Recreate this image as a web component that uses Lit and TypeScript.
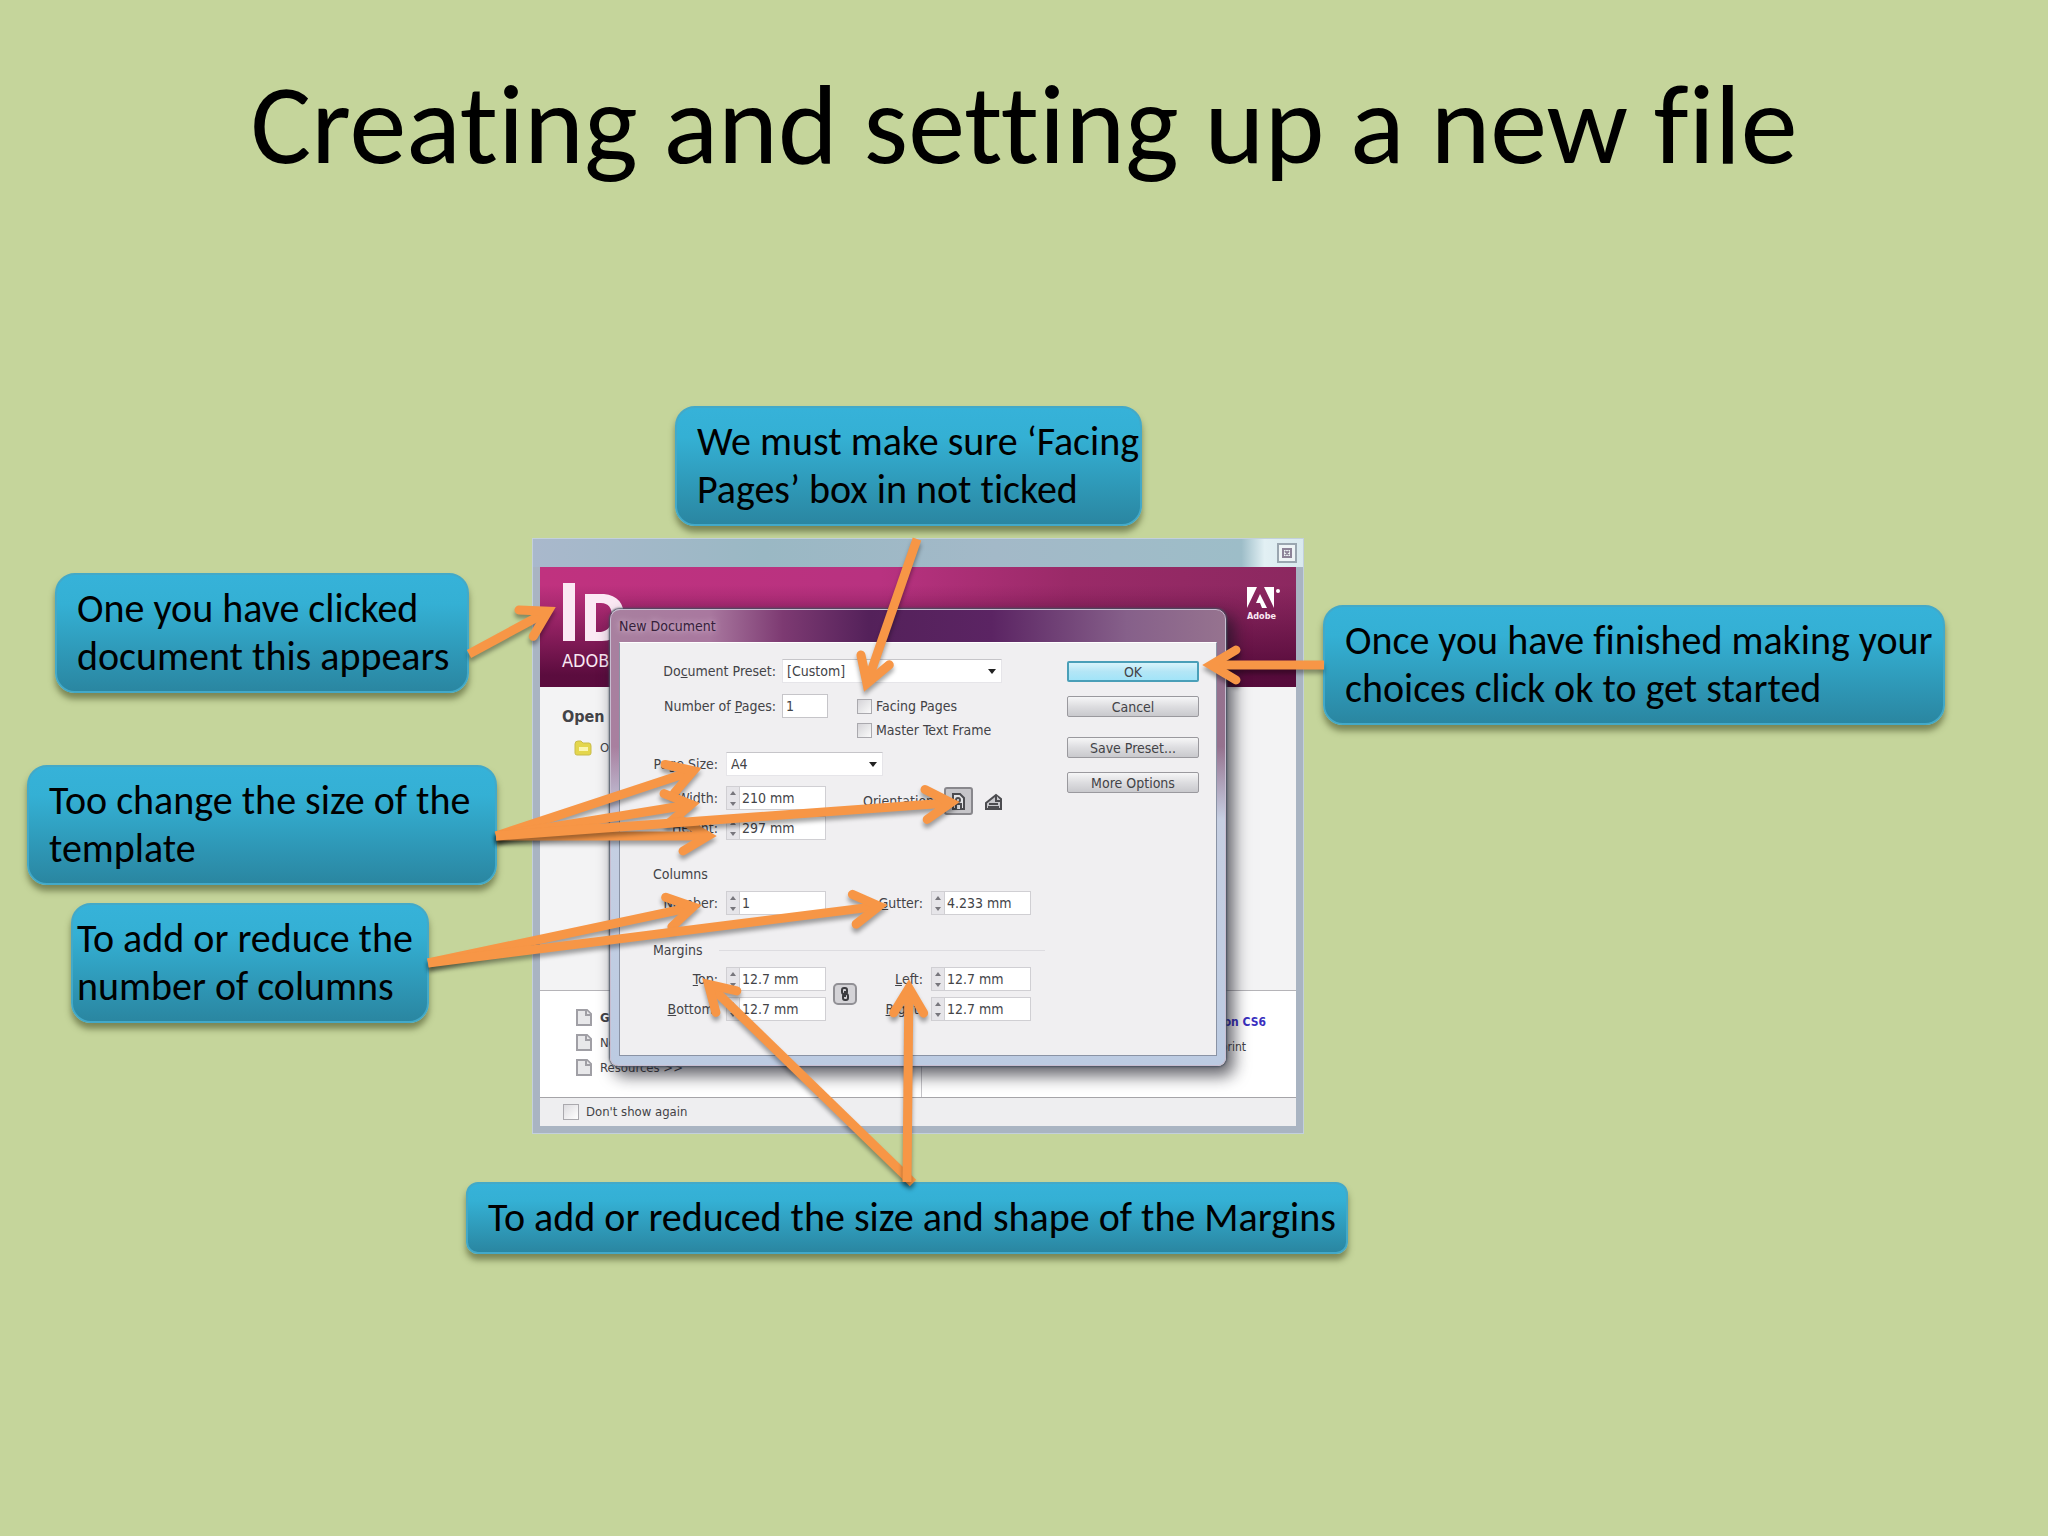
import { LitElement, html, css, svg } from "lit";
import { customElement, property } from "lit/decorators.js";
import { styleMap } from "lit/directives/style-map.js";

interface Note {
  text: string;
  x: number;
  y: number;
  w: number;
  kind: string;
}

// Offsets are measured from the horizontal centre of the slide.
const NOTES: Note[] = [
  { text: "One you have clicked\ndocument this appears", x: -969, y: 373, w: 414, kind: "" },
  { text: "We must make sure ‘Facing\nPages’ box in not ticked", x: -349, y: 206, w: 467, kind: "" },
  { text: "Too change the size of the\ntemplate", x: -997, y: 565, w: 470, kind: "" },
  { text: "To add or reduce the\nnumber of columns", x: -953, y: 703, w: 358, kind: "tight" },
  { text: "Once you have finished making your\nchoices click ok to get started", x: 299, y: 405, w: 622, kind: "" },
  { text: "To add or reduced the size and shape of the Margins", x: -558, y: 982, w: 882, kind: "single" },
];

// Each arrow: start x, start y, tip x, tip y.
const ARROWS: number[][] = [
  [469, 654, 556, 607],
  [917, 539, 864, 692],
  [1324, 665, 1202, 665],
  [496, 836, 702, 768],
  [496, 836, 700, 803],
  [496, 836, 717, 836],
  [496, 836, 960, 802],
  [428, 963, 702, 905],
  [428, 963, 888, 905],
  [913, 1183, 702, 978],
  [907, 1182, 909, 979],
];

@customElement("arrow-layer")
class ArrowLayer extends LitElement {
  static styles = css`
    :host { display: block; pointer-events: none; }
    .layer { display: block; overflow: visible; }
    .arrow { fill: none; stroke: #f79646; stroke-width: 9; filter: drop-shadow(0 4px 2px rgba(0, 0, 0, 0.35)); }
    .head { stroke-linecap: round; stroke-linejoin: miter; }
  `;
  render() {
    return html`<svg class="layer" width="2048" height="1336" viewBox="0 200 2048 1336" aria-hidden="true">
      ${ARROWS.map(([x1, y1, x2, y2]) => {
        const len = Math.hypot(x2 - x1, y2 - y1);
        const ux = (x2 - x1) / len;
        const uy = (y2 - y1) / len;
        const tx = x2 - ux * 9;
        const ty = y2 - uy * 9;
        const bx = tx - ux * 25;
        const by = ty - uy * 25;
        return svg`<g class="arrow">
          <path d="M${x1} ${y1}L${tx} ${ty}"></path>
          <path class="head" d="M${bx - uy * 15} ${by + ux * 15}L${tx} ${ty}L${bx + uy * 15} ${by - ux * 15}"></path>
        </g>`;
      })}
    </svg>`;
  }
}

@customElement("measure-field")
class MeasureField extends LitElement {
  @property() label = "";
  @property() key = "";
  @property() value = "";
  static styles = css`
    :host { display: flex; align-items: center; justify-content: flex-end; height: 24px; gap: 8px; }
    .label { white-space: nowrap; }
    .key { text-decoration: underline; }
    .box { display: flex; flex: none; width: 100px; height: 24px; box-sizing: border-box; border: 1px solid #d0cfd3; background: #fff; }
    .spin { display: flex; flex-direction: column; width: 12px; background: #e6e5e9; border-right: 1px solid #d0cfd3; }
    .step { flex: 1; display: grid; place-items: center; border: 0; padding: 0; background: none; min-height: 0; }
    .glyph { display: block; fill: #77767c; }
    .input { flex: 1; min-width: 0; border: 0; padding: 0 2px; background: #fff; font: inherit; color: inherit; outline: 0; }
  `;
  render() {
    const i = this.label.indexOf(this.key);
    const cut = this.key ? i : 0;
    return html`<label class="label" for="v"
        >${this.label.slice(0, cut)}<span class="key">${this.key}</span>${this.label.slice(cut + this.key.length)}</label
      >
      <div class="box">
        <div class="spin">
          <button class="step" aria-label="Increase"><svg class="glyph" width="6" height="4"><path d="M0 4L3 0L6 4Z"></path></svg></button>
          <button class="step" aria-label="Decrease"><svg class="glyph" width="6" height="4"><path d="M0 0L3 4L6 0Z"></path></svg></button>
        </div>
        <input class="input" id="v" .value=${this.value} />
      </div>`;
  }
}

@customElement("new-document")
class NewDocument extends LitElement {
  static styles = css`
    :host { display: block; box-sizing: border-box; padding: 0 8px 9px; border: 1px solid #c7bdd0; border-radius: 10px 10px 8px 8px;
      background: linear-gradient(180deg, rgba(150, 110, 145, 0) 30%, #c6cfe2 46%, #bccbe2 100%),
        linear-gradient(90deg, #a8809f 0, #a9789f 16%, #7d3a72 28%, #54215a 42%, #5b2463 62%, #86608a 84%, #96738f 100%);
      box-shadow: 0 0 2px 1px #46505f, 6px 8px 16px 2px rgba(20, 20, 30, 0.65); color: #434347; }
    .title { margin: 0; height: 32px; line-height: 32px; font-size: 14px; font-weight: 400; color: #35203a; text-shadow: 0 0 6px #e6cfe2; }
    .body { display: flex; justify-content: space-between; align-items: flex-start; box-sizing: border-box; min-height: 414px;
      padding: 16px 17px 0 33px; background: #f0eff1; border: 1px solid #8a93a5; border-top-color: #fff; }
    .form { display: flex; flex-direction: column; width: 392px; }
    .row { display: flex; align-items: center; height: 24px; }
    .wide { gap: 6px; padding-left: 5px; }
    .name { text-align: right; white-space: nowrap; }
    .n1 { width: 118px; }
    .n2 { width: 65px; }
    .key { text-decoration: underline; }
    .drop { position: relative; display: flex; }
    .select { appearance: none; border: 1px solid #e6e5e9; border-top-color: #c6c5c9; height: 24px; padding: 0 4px; background: #fff; font: inherit; color: inherit; }
    .s1 { width: 220px; }
    .s2 { width: 157px; }
    .arrow { position: absolute; right: 6px; top: 10px; fill: #222; }
    .pages { display: flex; align-items: flex-start; margin-top: 11px; }
    .count { box-sizing: border-box; width: 46px; height: 24px; border: 1px solid #c6c5c9; padding: 0 3px; font: inherit; color: inherit; background: #fff; }
    .ticks { margin-left: 29px; }
    .tick { display: flex; align-items: center; gap: 4px; height: 24px; white-space: nowrap; }
    .check { appearance: none; margin: 0; width: 15px; height: 15px; border: 1px solid #aaa9ae; background: linear-gradient(135deg, #d5d4d8, #fafafa); }
    .size { gap: 8px; margin-top: 10px; }
    .pair { display: flex; align-items: center; justify-content: space-between; margin-top: 10px; }
    .stack { display: grid; gap: 6px; width: 173px; }
    .far { width: 160px; margin-right: 14px; }
    .orient { display: flex; align-items: center; gap: 6px; width: 182px; height: 30px; align-self: flex-start; }
    .page { display: grid; place-items: center; width: 29px; height: 28px; padding: 0; border: 0; background: none; }
    .on { background: #c6c5c9; border: 2px solid #88878c; border-radius: 3px; }
    .group { margin: 0; font: inherit; height: 18px; line-height: 18px; display: flex; align-items: center; gap: 16px; }
    .cols { margin-top: 25px; }
    .marg { margin-top: 26px; }
    .marg::after { content: ""; flex: 1; height: 1px; background: #dddce0; }
    .near { margin-top: 8px; }
    .link { display: grid; place-items: center; width: 24px; height: 22px; padding: 0; border: 2px solid #919095; border-radius: 5px; background: #d4d3d7; }
    .both { display: flex; align-items: center; gap: 7px; }
    .actions { display: flex; flex-direction: column; width: 132px; padding-top: 2px; gap: 14px; }
    .btn { height: 21px; padding: 0; border: 1px solid #9a999e; border-radius: 2px; background: linear-gradient(#f6f6f7, #dddde0 50%, #c9c9cd); font: inherit; line-height: 18px; color: inherit; }
    .ok { border: 2px solid #4a9fb8; background: linear-gradient(#d8f4fb, #b4e6f6 50%, #a2e4f8); }
    .after { margin-top: 6px; }
  `;
  render() {
    return html`<h2 class="title">New Document</h2>
      <div class="body">
        <div class="form">
          <div class="row wide">
            <label class="name n1" for="preset">Do<span class="key">c</span>ument Preset:</label>
            <span class="drop"><select class="select s1" id="preset"><option>[Custom]</option></select>
              <svg class="arrow" width="8" height="5"><path d="M0 0H8L4 5Z"></path></svg></span>
          </div>
          <div class="pages">
            <div class="row wide">
              <label class="name n1" for="count">Number of <span class="key">P</span>ages:</label>
              <input class="count" id="count" value="1" />
            </div>
            <div class="ticks">
              <label class="tick"><input class="check" type="checkbox" />Facing Pages</label>
              <label class="tick"><input class="check" type="checkbox" />Master Text Frame</label>
            </div>
          </div>
          <div class="row size">
            <label class="name n2" for="size">Page Size:</label>
            <span class="drop"><select class="select s2" id="size"><option>A4</option></select>
              <svg class="arrow" width="8" height="5"><path d="M0 0H8L4 5Z"></path></svg></span>
          </div>
          <div class="pair">
            <div class="stack">
              <measure-field label="Width:" key="W" value="210 mm"></measure-field>
              <measure-field label="Height:" key="H" value="297 mm"></measure-field>
            </div>
            <div class="orient">
              <span>Orientation:</span>
              <button class="page on" aria-label="Portrait">
                <svg width="15" height="19" fill="#e4e4e6" stroke="#4c4c50" stroke-width="2"><path d="M2 2H9L13 6V17H2Z"></path><circle cx="7" cy="8" r="2"></circle><path d="M5 17V12H10V17"></path></svg>
              </button>
              <button class="page" aria-label="Landscape">
                <svg width="19" height="19" fill="#c8c8cc" stroke="#4c4c50" stroke-width="2"><path d="M2 17V11L12 3L17 7V17Z"></path><path d="M5 12H14M12 3V9H17M4 15H15"></path></svg>
              </button>
            </div>
          </div>
          <h3 class="group cols">Columns</h3>
          <div class="pair near">
            <div class="stack"><measure-field label="Number:" key="N" value="1"></measure-field></div>
            <div class="stack far"><measure-field label="Gutter:" key="G" value="4.233 mm"></measure-field></div>
          </div>
          <h3 class="group marg">Margins</h3>
          <div class="pair near">
            <div class="both">
              <div class="stack">
                <measure-field label="Top:" key="T" value="12.7 mm"></measure-field>
                <measure-field label="Bottom:" key="B" value="12.7 mm"></measure-field>
              </div>
              <button class="link" aria-label="Make all settings the same">
                <svg width="10" height="14" fill="none" stroke="#3c3c40" stroke-width="2"><rect x="2" y="1" width="5" height="6" rx="2"></rect><rect x="3" y="7" width="5" height="6" rx="2"></rect><path d="M5 4V10"></path></svg>
              </button>
            </div>
            <div class="stack far">
              <measure-field label="Left:" key="L" value="12.7 mm"></measure-field>
              <measure-field label="Right:" key="R" value="12.7 mm"></measure-field>
            </div>
          </div>
        </div>
        <div class="actions">
          <button class="btn ok">OK</button>
          <button class="btn">Cancel</button>
          <button class="btn after">Save Preset...</button>
          <button class="btn">More Options</button>
        </div>
      </div>`;
  }
}

@customElement("welcome-window")
class WelcomeWindow extends LitElement {
  static styles = css`
    :host { display: flex; flex-direction: column; box-sizing: border-box; padding: 0 7px 7px; border: 1px solid #c3d0dc; color: #434347; background: #a9b4c2; }
    .bar { display: flex; justify-content: flex-end; align-items: center; height: 28px; margin: 0 -7px; padding-right: 6px;
      background: linear-gradient(90deg, #a9b8cc, #9ab8c4 30%, #a3b9c8 60%, #9dbdc8 92%, #e2f0f4 95%, #d9e9ee); }
    .close { display: grid; place-items: center; width: 20px; height: 20px; padding: 0; border: 2px solid #9aa6b0; background: #eef4f6; }
    .banner { display: flex; justify-content: space-between; box-sizing: border-box; height: 120px; padding: 14px 15px 0 22px; color: #fbe9f4;
      background: linear-gradient(180deg, rgba(80, 0, 50, 0) 15%, rgba(80, 8, 55, 0.9) 90%), linear-gradient(90deg, #c0327f, #b83280 45%, #9a2a68 70%, #8c2860); }
    .mark { display: flex; flex-direction: column; gap: 10px; font-size: 18px; line-height: 20px; }
    .id { display: block; fill: #fbe9f4; }
    .adobe { display: flex; flex-direction: column; align-items: flex-start; padding-top: 4px; font-size: 9px; line-height: 14px; font-weight: 700; }
    .recent { flex: 1; padding: 20px 22px; background: #f3f3f4; }
    .head { margin: 0 0 8px; font-size: 16px; line-height: 20px; font-weight: 700; }
    .item { display: flex; align-items: center; gap: 8px; height: 25px; }
    .open { padding-left: 12px; }
    .news { display: flex; box-sizing: border-box; height: 108px; background: #fff; border-top: 1px solid #b5b4b8; border-bottom: 1px solid #a5a4a8; }
    .list { flex: 1; padding: 14px 0 0 36px; border-right: 1px solid #c5c4c8; }
    .side { flex: 1; display: flex; flex-direction: column; align-items: flex-end; padding: 18px 30px 0 0; font-size: 12px; }
    .link { color: #3a30c0; font-weight: 700; text-decoration: none; }
    .print { padding-right: 20px; }
    .foot { display: flex; align-items: center; gap: 7px; height: 28px; padding-left: 23px; background: #eeeef0; }
    .check { appearance: none; margin: 0; width: 16px; height: 16px; border: 1px solid #aaa9ae; background: linear-gradient(135deg, #dddce0, #fff); }
  `;
  render() {
    const doc = () => html`<svg width="16" height="19" fill="#e8e8ea" stroke="#a09fa5" stroke-width="2"><path d="M1 2H11L15 6V17H1Z"></path><path d="M10 2V7H15"></path></svg>`;
    return html`<div class="bar">
        <button class="close" aria-label="Close"><svg width="10" height="10" fill="none" stroke="#8d8398" stroke-width="2"><path d="M1 1H9V9H1ZM3 3L7 7M7 3L3 7"></path></svg></button>
      </div>
      <div class="banner">
        <div class="mark">
          <svg class="id" width="64" height="60" role="img" aria-label="Id"><path d="M1 2H13V60H1Z"></path><path fill-rule="evenodd" d="M23 13H42Q62 15 62 36Q62 59 40 60H23ZM34 22V51H39Q50 49 50 36Q50 22 39 22Z"></path></svg>
          <span>ADOBE</span>
        </div>
        <div class="adobe">
          <svg width="34" height="24" fill="#fff"><path d="M0 2H10L0 23ZM17 2H27V23ZM13 9L20 23H15L13 18H9Z"></path><circle cx="31" cy="6" r="2"></circle></svg>
          <span>Adobe</span>
        </div>
      </div>
      <div class="recent">
        <h2 class="head">Open</h2>
        <div class="item open">
          <svg width="18" height="16" fill="#e4d64c" stroke="#c9bc4a"><path d="M1 4Q1 1 4 1H7L9 3H15Q17 3 17 6V13Q17 15 15 15H3Q1 15 1 13Z"></path><path fill="#fbf6b0" stroke="none" d="M5 7H14V11H5Z"></path></svg>
          <span>Open...</span>
        </div>
      </div>
      <div class="news">
        <div class="list">
          <div class="item">${doc()}<b>Getting</b></div>
          <div class="item">${doc()}<span>New</span></div>
          <div class="item">${doc()}<span>Resources &gt;&gt;</span></div>
        </div>
        <div class="side">
          <span class="item"><a class="link" href="#cs6">InDesign on CS6</a></span>
          <span class="item print">print</span>
        </div>
      </div>
      <label class="foot"><input class="check" type="checkbox" />Don't show again</label>`;
  }
}

@customElement("app-root")
class AppRoot extends LitElement {
  static styles = css`
    :host { display: block; min-height: 100vh; overflow: hidden; background: #c5d59b; color: #000; font-family: Calibri, Carlito, Lato, "Open Sans", sans-serif; font-variant-ligatures: none; }
    .title { margin: 0; padding-top: 54px; height: 146px; line-height: 140px; font-size: 114px; font-weight: 400; text-align: center; white-space: nowrap; }
    .stage { position: relative; height: 1336px; }
    .shot, .dialog { font-family: "DejaVu Sans Condensed", "DejaVu Sans", sans-serif; font-size: 14px; line-height: 18px; }
    .shot { position: absolute; left: calc(50% - 492px); top: 338px; width: 772px; height: 596px; font-size: 13px; }
    .dialog { position: absolute; left: calc(50% - 414px); top: 409px; width: 616px; }
    .arrows { position: absolute; left: calc(50% - 1024px); top: 0; }
    .note { position: absolute; box-sizing: border-box; margin: 0; padding: 10px 0 10px 20px; border: 2px solid #43a9c8; border-radius: 20px;
      background: linear-gradient(#36b2d9, #34b0d4 25%, #2a86a1); box-shadow: 0 6px 6px rgba(60, 70, 30, 0.55);
      font-size: 40px; line-height: 48px; white-space: pre; }
    .tight { padding-left: 4px; }
    .single { border-radius: 12px; }
  `;
  render() {
    return html`<h1 class="title">Creating and setting up a new file</h1>
      <main class="stage">
        <welcome-window class="shot"></welcome-window>
        <new-document class="dialog"></new-document>
        ${NOTES.map(
          (n) => html`<p class="note ${n.kind}" style=${styleMap({ left: `calc(50% + ${n.x}px)`, top: `${n.y}px`, width: `${n.w}px` })}>${n.text}</p>`
        )}
        <arrow-layer class="arrows"></arrow-layer>
      </main>`;
  }
}
